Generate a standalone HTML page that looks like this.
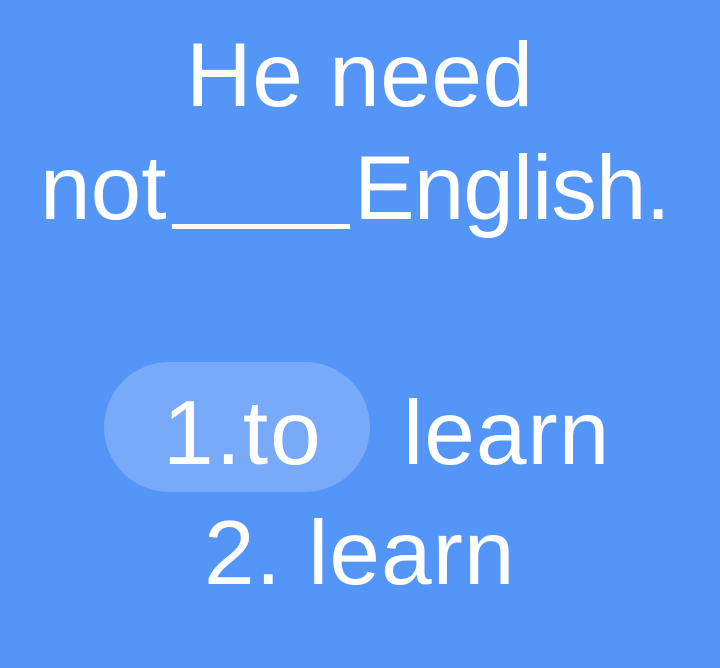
<!DOCTYPE html>
<html><head><style>
html,body{margin:0;padding:0}
body{width:720px;height:668px;background:#5495F8;position:relative;overflow:hidden;font-family:"Liberation Sans",sans-serif;color:#fff}
.t{position:absolute;font-size:91px;line-height:1;white-space:nowrap}
.pill{position:absolute;left:104px;top:362px;width:266px;height:130px;border-radius:65px;background:#78AAF9}
.u{position:absolute;left:172px;top:224px;width:178px;height:5px;background:#fff}
</style></head><body>
<div class="pill"></div>
<div class="t" style="left:186px;top:30px;letter-spacing:0.5px">He need</div>
<div class="t" style="left:40px;top:143px">not</div>
<div class="u"></div>
<div class="t" style="left:354px;top:143px;letter-spacing:-1px">English.</div>
<div class="t" style="left:163px;top:388px;letter-spacing:2px">1.to</div>
<div class="t" style="left:403px;top:388px;letter-spacing:1px">learn</div>
<div class="t" style="left:204px;top:508px;letter-spacing:1px">2. learn</div>
</body></html>
